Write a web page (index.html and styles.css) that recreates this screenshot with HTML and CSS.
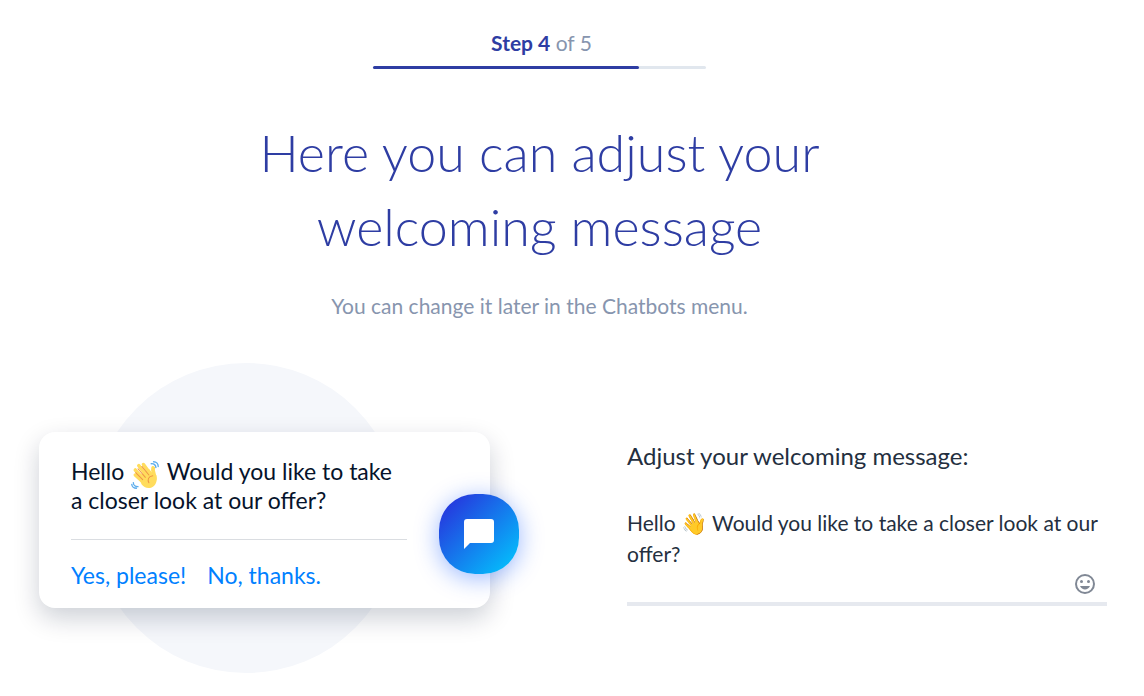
FILE: index.html
```html
<!DOCTYPE html>
<html lang="en">
<head>
  <meta charset="UTF-8">
  <meta name="viewport" content="width=device-width, initial-scale=1.0">
  <title>Welcoming message</title>
  <link rel="stylesheet" href="styles.css">
</head>
<body>
  <header class="header">
    <div class="steps">
      <p class="steps-label"><strong>Step 4</strong> of 5</p>
      <div class="progress"><div class="progress-bar" style="width: 80%"></div></div>
    </div>
    <h1>Here you can adjust your welcoming message</h1>
    <p class="subtitle">You can change it later in the Chatbots menu.</p>
  </header>

  <main class="content">
    <section class="preview">
      <div class="circle"></div>
      <div class="bubble">
        <p class="bubble-text">Hello
          <svg class="wave" viewBox="0 0 36 36" role="img" aria-label="waving hand">
            <g fill="none" stroke="#ffdc5d" stroke-linecap="round" stroke-linejoin="round">
              <path stroke-width="4.500" d="M5.500 18l11 10M5.500 11.500l13 14M10 6l12 15M16 4.500l10 14"/>
              <path stroke-width="5" d="M28.500 9c-1.500 4 2 8 2 14"/>
            </g>
            <path fill="#ffdc5d" d="M10 20L23 10l5 6 4.500 2c2 8-1 14-6 16-5 2-10 0-13-4z"/>
            <path fill="none" stroke="#ef9645" stroke-width="1.300" stroke-linecap="round" d="M6 15l9 9M9 10l9.500 11M14 7l9 11M28 19c-6 1-7 5-5 9"/>
            <path fill="none" stroke="#5dadec" stroke-width="1.800" stroke-linecap="round" d="M26 3.500c3.500-.5 6 2 6 5M29 1c4 0 6 3 6 6M3 28c0 3 3 5 6 5M1 30c0 3 3 5 6 5"/>
          </svg>
          Would you like to take<br>a closer look at our offer?</p>
        <div class="replies">
          <a href="#">Yes, please!</a>
          <a href="#">No, thanks.</a>
        </div>
      </div>
      <button class="chat-button" type="button" aria-label="Open chat">
        <svg viewBox="0 0 30 30">
          <path fill="#fff" d="M3 0h24a3 3 0 0 1 3 3v18a3 3 0 0 1-3 3H6l-6 6V3a3 3 0 0 1 3-3z"/>
        </svg>
      </button>
    </section>

    <section class="editor">
      <label for="message">Adjust your welcoming message:</label>
      <div class="field">
        <textarea id="message" rows="2">Hello 👋 Would you like to take a closer look at our offer?</textarea>
        <button class="emoji-button" type="button" aria-label="Insert emoji">
          <svg viewBox="0 0 20 20">
            <circle cx="10" cy="10" r="9" fill="none" stroke="#808895" stroke-width="2"/>
            <circle cx="6.5" cy="7.5" r="1.5" fill="#808895"/>
            <circle cx="13.5" cy="7.5" r="1.5" fill="#808895"/>
            <path fill="#808895" d="M5 12h10c-1 2-3 3.500-5 3.500S6 14 5 12z"/>
          </svg>
        </button>
      </div>
    </section>
  </main>
</body>
</html>
```

FILE: styles.css
```css
* {
  box-sizing: border-box;
}

body {
  margin: 0;
  padding-left: 2px;
  font-family: Lato, "Liberation Sans", sans-serif;
  font-size: 21px;
  color: #242f40;
  background-color: #fff;
}

h1,
p {
  margin: 0;
}

.header {
  display: flex;
  flex-direction: column;
  align-items: center;
  padding: 27px 67px 0 0;
  text-align: center;
}

.steps {
  width: 333px;
}

.steps-label {
  padding-left: 4px;
  line-height: 32px;
  color: #8795ae;
}

.steps-label strong {
  color: #2e3da3;
}

.progress {
  height: 3px;
  margin-top: 7px;
  border-radius: 2px;
  background-color: #e1e7ee;
}

.progress-bar {
  height: 3px;
  border-radius: 2px;
  background-color: #2e3da3;
}

h1 {
  max-width: 640px;
  margin-top: 46px;
  font-size: 52px;
  font-weight: 300;
  line-height: 74px;
  color: #2e3da3;
}

.subtitle {
  margin-top: 27px;
  line-height: 32px;
  color: #8795ae;
}

.content {
  display: grid;
  grid-template-columns: 1fr 1fr;
  column-gap: 108px;
  max-width: 1068px;
  margin: 41px auto 0;
}

.preview {
  position: relative;
  padding: 69px 29px 65px 0;
}

/* soft circle behind the chat bubble */
.circle {
  position: absolute;
  top: 0;
  left: 52px;
  width: 310px;
  height: 310px;
  border-radius: 50%;
  background-color: #f5f7fb;
}

.bubble {
  position: relative;
  padding: 25px 32px 17px;
  border-radius: 16px;
  background-color: #fff;
  box-shadow: 0 10px 26px rgba(0, 20, 50, 0.2);
  font-size: 23px;
}

.bubble-text {
  max-width: 336px;
  padding-bottom: 24px;
  border-bottom: 1px solid #dadde1;
  line-height: 29px;
  color: #06132b;
}

.wave {
  width: 28px;
  height: 28px;
  margin: -4px 2px -4px 1px;
  vertical-align: -5px;
}

.replies {
  display: flex;
  gap: 21px;
  padding-top: 19px;
  line-height: 32px;
}

.replies a {
  color: #0080ff;
  text-decoration: none;
}

button {
  padding: 0;
  border: none;
  background: none;
  cursor: pointer;
}

.chat-button {
  position: absolute;
  top: 131px;
  right: 0;
  display: flex;
  align-items: center;
  justify-content: center;
  width: 80px;
  height: 80px;
  border-radius: 36px;
  background: linear-gradient(135deg, #2a27da 0%, #00ccff 100%);
  box-shadow: 0 4px 24px rgba(0, 77, 255, 0.4);
}

.chat-button svg {
  width: 30px;
  height: 30px;
}

.editor {
  padding-top: 77px;
}

.editor label {
  display: block;
  font-size: 24px;
  line-height: 32px;
}

.field {
  display: flex;
  flex-direction: column;
  margin-top: 35px;
  padding-bottom: 8px;
  border-bottom: 4px solid #e6e9ef;
}

.field textarea {
  display: block;
  width: 100%;
  padding: 0;
  border: none;
  outline: none;
  resize: none;
  overflow: hidden;
  background: none;
  font: inherit;
  line-height: 31px;
  color: inherit;
}

.emoji-button {
  align-self: flex-end;
  width: 20px;
  height: 20px;
  margin: 5px 12px 0 0;
}

.emoji-button svg {
  display: block;
}
```
